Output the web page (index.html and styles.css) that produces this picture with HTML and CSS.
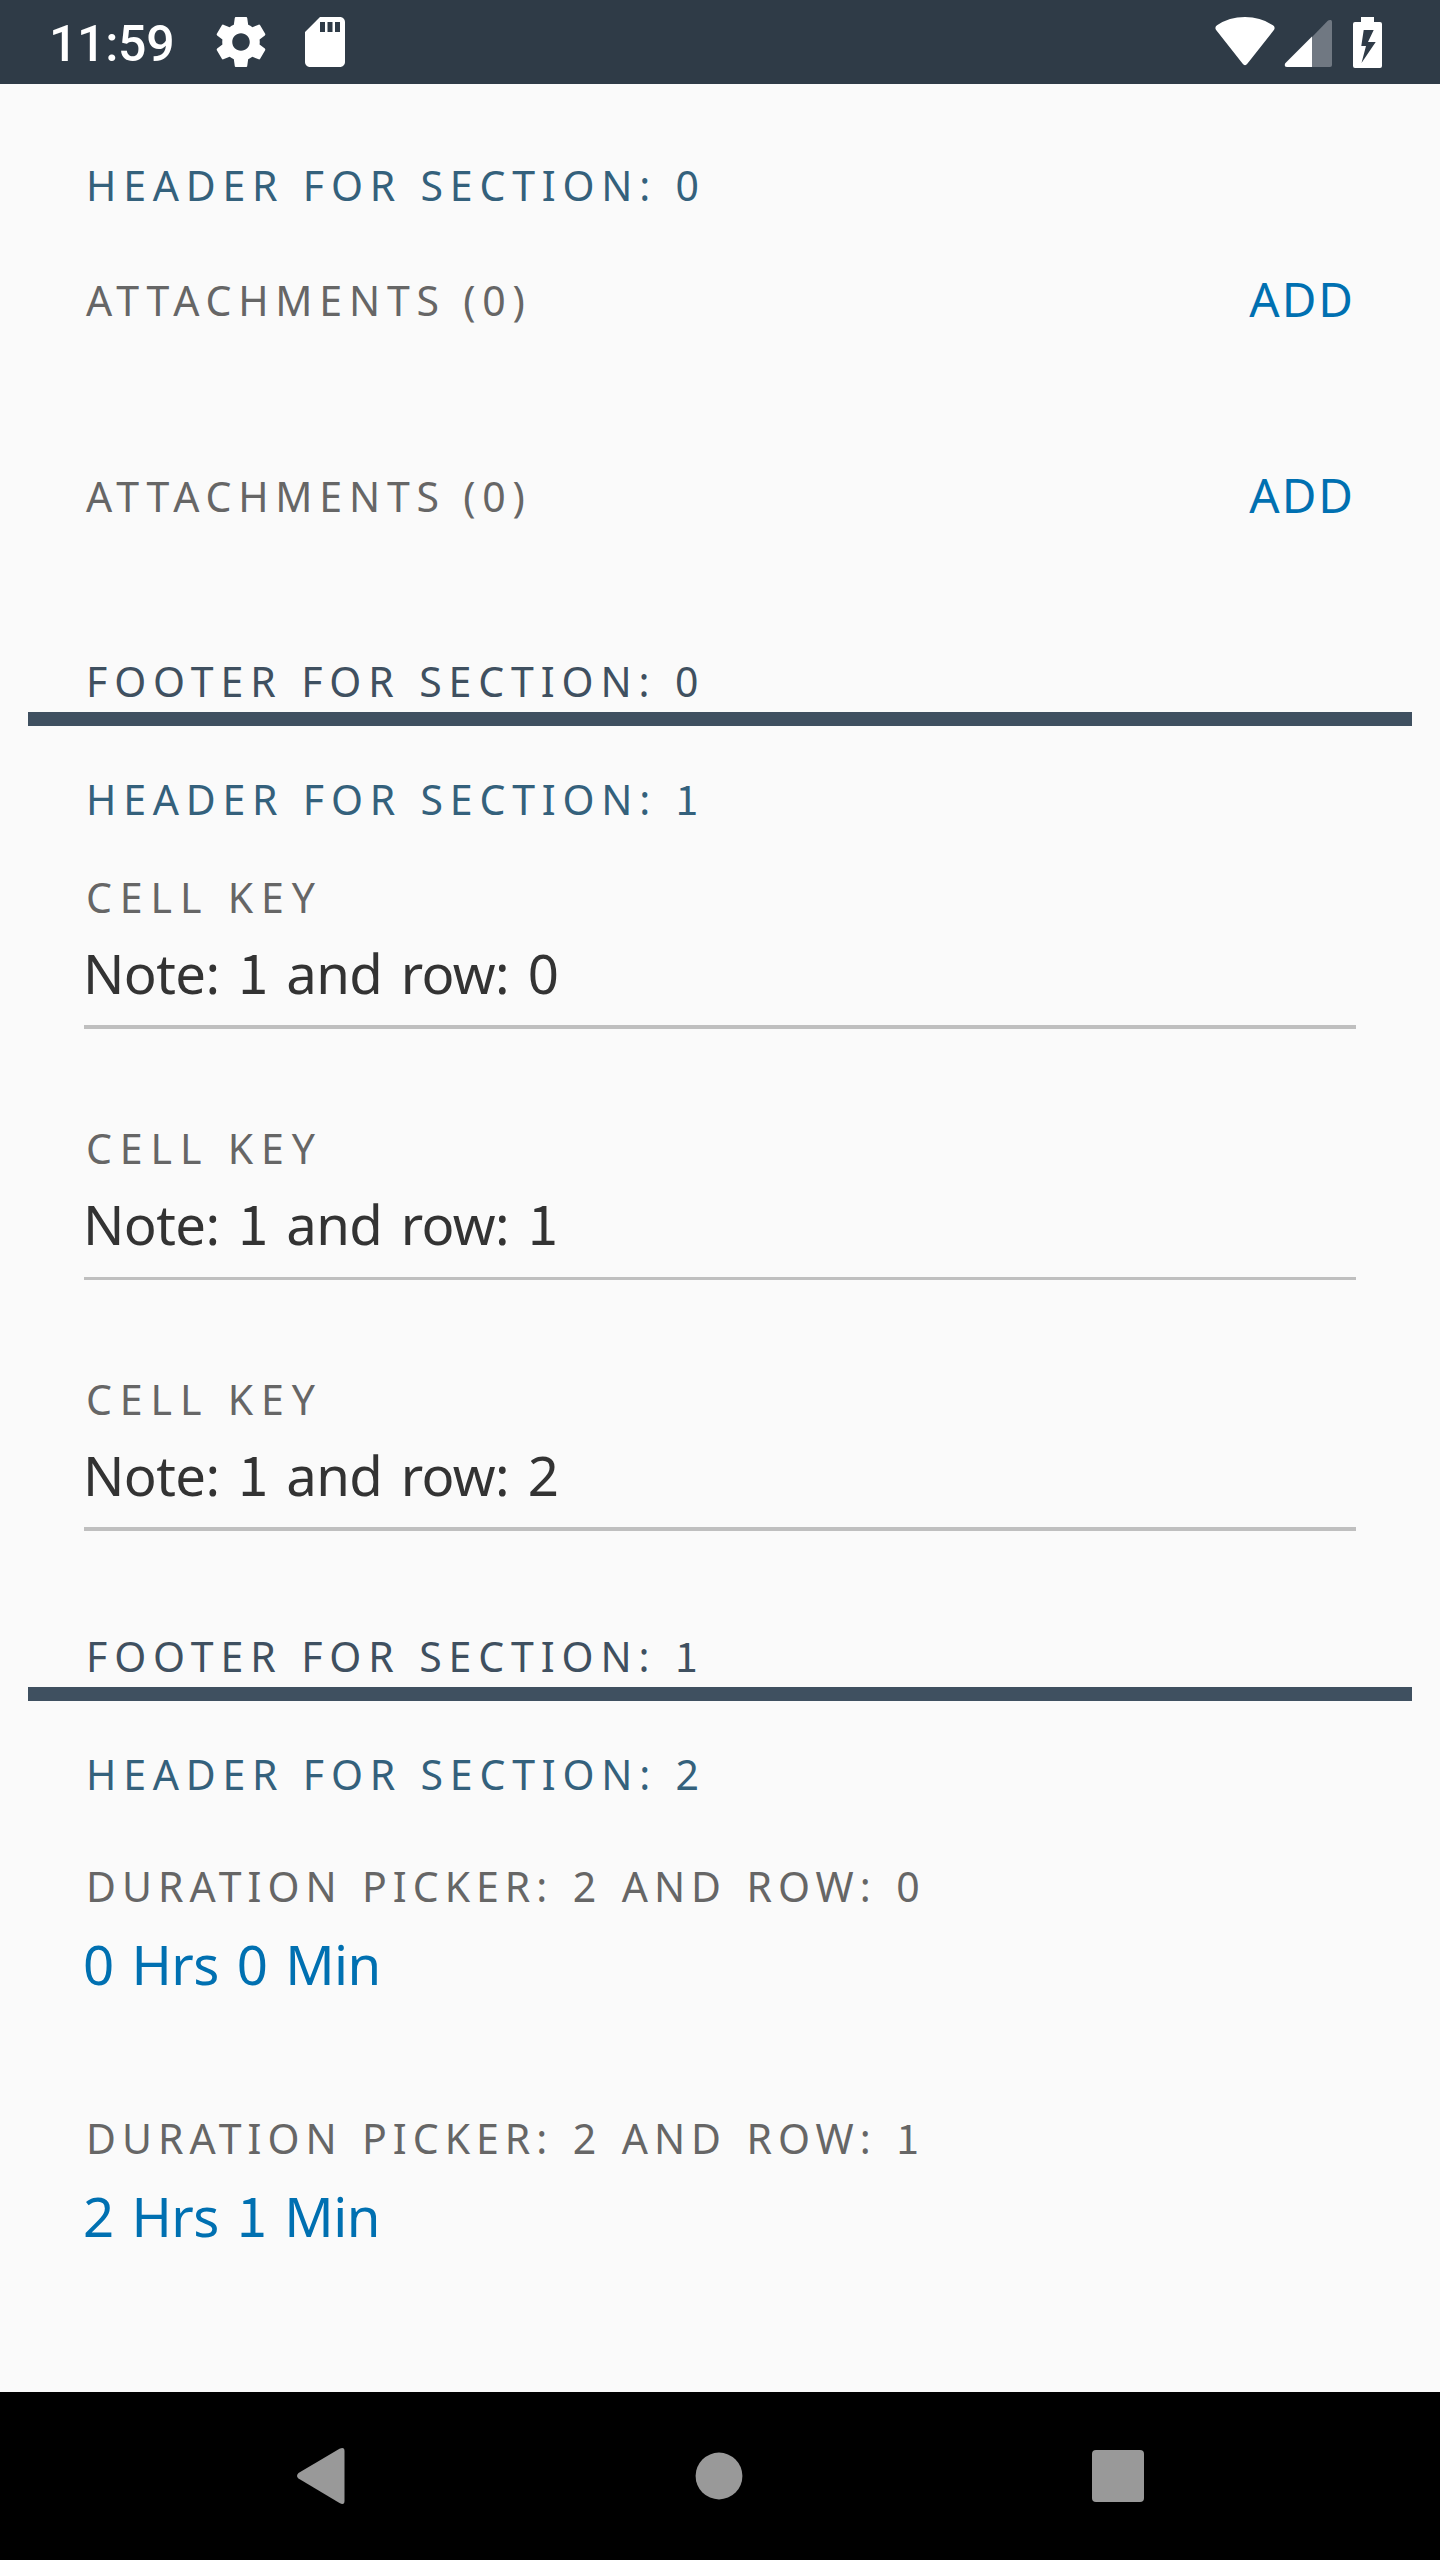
FILE: index.html
```html
<!DOCTYPE html>
<html lang="en">
<head>
<meta charset="utf-8">
<title>Form cells</title>
<link rel="stylesheet" href="styles.css">
</head>
<body>
<div class="screen">
  <header class="status">
    <span class="clock">11:59</span>
    <svg class="gear" width="60" height="60" viewBox="0 0 24 24" fill="#fff"><path d="M19.43 12.98c.04-.32.07-.64.07-.98s-.03-.66-.07-.98l2.11-1.65c.19-.15.24-.42.12-.64l-2-3.46c-.12-.22-.39-.3-.61-.22l-2.49 1c-.52-.4-1.08-.73-1.69-.98l-.38-2.65C14.46 2.18 14.25 2 14 2h-4c-.25 0-.46.18-.49.42l-.38 2.65c-.61.25-1.17.59-1.69.98l-2.49-1c-.23-.09-.49 0-.61.22l-2 3.46c-.13.22-.07.49.12.64l2.11 1.65c-.04.32-.07.65-.07.98s.03.66.07.98l-2.11 1.65c-.19.15-.24.42-.12.64l2 3.46c.12.22.39.3.61.22l2.49-1c.52.4 1.08.73 1.69.98l.38 2.65c.03.24.24.42.49.42h4c.25 0 .46-.18.49-.42l.38-2.65c.61-.25 1.17-.59 1.69-.98l2.49 1c.23.09.49 0 .61-.22l2-3.46c.12-.22.07-.49-.12-.64l-2.11-1.65zM12 15.500c-1.930 0-3.500-1.570-3.500-3.500s1.570-3.500 3.500-3.500 3.500 1.570 3.500 3.500-1.570 3.500-3.500 3.500z"/></svg>
    <svg class="card" width="60" height="60" viewBox="0 0 24 24" fill="#fff"><path d="M18 2h-8L4 8v12c0 1.1.9 2 2 2h12c1.1 0 2-.9 2-2V4c0-1.1-.9-2-2-2zM12 8h-2V4h2v4zm3 0h-2V4h2v4zm3 0h-2V4h2v4z"/></svg>
    <svg class="signals" width="124" height="84" viewBox="0 0 124 84">
      <path fill="#fff" d="M6.500 30.500Q4 27.500 7 25.300Q19 17 35 17Q51 17 63 25.300Q66 27.500 63.500 30.500L37.500 63.500Q35 67 32.500 63.500Z"/>
      <path fill="#707882" d="M102 37L117.500 21Q119 19.500 121 20Q122 20.500 122 22V65Q122 67 120 67H102Z"/>
      <path fill="#fff" d="M102 36.500V67H77Q74.500 67 74.800 64.500Q74.800 63.500 76 62.500Z"/>
    </svg>
    <svg class="battery" width="29" height="51" viewBox="0 0 29 51"><path fill="#fff" fill-rule="evenodd" d="M8 0H21V5H27Q29 5 29 7V49Q29 51 27 51H2Q0 51 0 49V7Q0 5 2 5H8ZM10.700 13L8.300 29H13L8.500 46L22.700 25H15L20.700 13Z"/></svg>
  </header>

  <main>
    <section class="first">
      <h2 class="label head">HEADER FOR SECTION: 0</h2>
      <div class="attach"><span class="label files">ATTACHMENTS (0)</span><a class="add">ADD</a></div>
      <div class="attach next"><span class="label files">ATTACHMENTS (0)</span><a class="add">ADD</a></div>
      <p class="label foot">FOOTER FOR SECTION: 0</p>
      <div class="bar"></div>
    </section>

    <section>
      <h2 class="label head">HEADER FOR SECTION: <span class="num">1</span></h2>
      <div class="cell"><p class="label key">CELL KEY</p><p class="value">Note: <span class="num">1</span> and row: 0</p></div>
      <div class="cell thin"><p class="label key">CELL KEY</p><p class="value">Note: <span class="num">1</span> and row: <span class="num">1</span></p></div>
      <div class="cell"><p class="label key">CELL KEY</p><p class="value">Note: <span class="num">1</span> and row: 2</p></div>
      <p class="label foot">FOOTER FOR SECTION: <span class="num">1</span></p>
      <div class="bar"></div>
    </section>

    <section>
      <h2 class="label head">HEADER FOR SECTION: 2</h2>
      <div class="duration"><p class="label time">DURATION PICKER: 2 AND ROW: 0</p><p class="value">0 Hrs 0 Min</p></div>
      <div class="duration"><p class="label time">DURATION PICKER: 2 AND ROW: <span class="num">1</span></p><p class="value">2 Hrs <span class="num">1</span> Min</p></div>
    </section>
  </main>

  <nav class="nav">
    <svg width="50" height="58" viewBox="0 0 50 58" fill="#999"><path d="M2.500 31.500Q-.5 29 2.500 26L43.500 1.800Q48.500-.5 48.500 4V54Q48.500 58.500 43.500 56Z"/></svg>
    <svg width="48" height="48" viewBox="0 0 48 48" fill="#999"><circle cx="24" cy="24" r="23.400"/></svg>
    <svg width="52" height="52" viewBox="0 0 52 52" fill="#999"><rect width="52" height="52" rx="4"/></svg>
  </nav>
</div>
</body>
</html>
```
FILE: styles.css
```css
* { box-sizing: border-box; margin: 0; padding: 0; }
body {
  width: 1440px;
  background: #fafafa;
  font-family: "Noto Sans", "Open Sans", sans-serif;
}
.screen { display: flex; flex-direction: column; height: 2560px; overflow: hidden; }

.status {
  display: flex;
  align-items: center;
  flex: none;
  height: 84px;
  padding-left: 49px;
  background: #2f3b47;
}
.clock {
  width: 162px;
  font: 500 50px/60px Roboto, sans-serif;
  letter-spacing: -0.3px;
  padding-top: 3px;
  color: #fff;
}
.card { margin-left: 24px; }
.signals { margin-left: 855px; }
.battery { margin-left: 19px; }

main { flex: 1; min-height: 0; }
section { padding-top: 47px; }
section.first { padding-top: 75px; }

.label {
  height: 50px;
  padding-left: 86px;
  font-size: 41px;
  font-weight: 400;
  line-height: 52px;
  white-space: nowrap;
  color: #666;
}
.head { letter-spacing: 6.8px; word-spacing: 1px; color: #34617c; }
.foot { letter-spacing: 6.9px; word-spacing: 1px; margin-top: 99px; color: #3f5060; }
.files { letter-spacing: 6.8px; }
.key { letter-spacing: 7.9px; }
.time { letter-spacing: 6px; word-spacing: 2.8px; }
.num { font-family: "Noto Sans CJK SC", sans-serif; line-height: 1; }

.attach {
  display: flex;
  justify-content: space-between;
  height: 50px;
  margin-top: 65px;
  padding-right: 85px;
}
.attach.next { margin-top: 146px; }
.first .foot { margin-top: 135px; }
.add {
  font-size: 47.5px;
  line-height: 50px;
  letter-spacing: 2px;
  color: #0070b1;
}

.bar { height: 14px; margin: 7px 28px 0; background: #3f5060; }

.cell { margin-top: 93px; }
.head + .cell { margin-top: 48px; }
.value {
  height: 60px;
  margin-top: 22px;
  padding-left: 83px;
  font-size: 54.5px;
  line-height: 60px;
  letter-spacing: -0.6px;
  word-spacing: 5px;
  white-space: nowrap;
  color: #333;
}
.cell::after {
  content: "";
  display: block;
  height: 4px;
  margin: 22px 84px 0;
  background: #bfbfbf;
}
.cell.thin::after { height: 3px; margin-top: 23px; }

.duration { margin-top: 118px; }
.head + .duration { margin-top: 62px; }
.duration .value { margin-top: 24px; word-spacing: 4.4px; color: #0070b1; }

.nav {
  display: flex;
  flex: none;
  align-items: center;
  justify-content: space-between;
  height: 168px;
  padding: 0 296px;
  background: #000;
}
```
